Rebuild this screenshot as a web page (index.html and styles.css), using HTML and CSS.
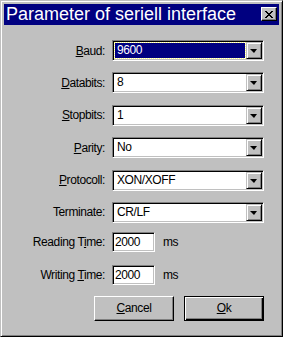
FILE: index.html
```html
<!DOCTYPE html>
<html lang="en">
<head>
  <meta charset="UTF-8">
  <title>Parameter of seriell interface</title>
  <link rel="stylesheet" href="styles.css">
</head>
<body>
  <div class="window">
    <div class="titlebar">
      <span class="title">Parameter of seriell interface</span>
      <button class="close-btn">
        <svg width="8" height="7" viewBox="0 0 8 7" shape-rendering="crispEdges">
          <path d="M0 0h2v1h-2z M6 0h2v1h-2z M1 1h2v1h-2z M5 1h2v1h-2z M2 2h4v1h-4z M3 3h2v1h-2z M2 4h4v1h-4z M1 5h2v1h-2z M5 5h2v1h-2z M0 6h2v1h-2z M6 6h2v1h-2z" fill="#000"/>
        </svg>
      </button>
    </div>

    <div class="form">
      <div class="combos">
        <label class="lbl"><u>B</u>aud:</label>
        <div class="combo focused"><span class="value"><span class="sel">9600</span></span><span class="drop"></span></div>

        <label class="lbl"><u>D</u>atabits:</label>
        <div class="combo"><span class="value">8</span><span class="drop"></span></div>

        <label class="lbl"><u>S</u>topbits:</label>
        <div class="combo"><span class="value">1</span><span class="drop"></span></div>

        <label class="lbl"><u>P</u>arity:</label>
        <div class="combo"><span class="value">No</span><span class="drop"></span></div>

        <label class="lbl"><u>P</u>rotocoll:</label>
        <div class="combo"><span class="value">XON/XOFF</span><span class="drop"></span></div>

        <label class="lbl">Terminate:</label>
        <div class="combo"><span class="value">CR/LF</span><span class="drop"></span></div>
      </div>

      <div class="times">
        <label class="lbl">Reading T<u>i</u>me:</label>
        <div class="time-field"><span class="edit">2000</span><span class="unit">ms</span></div>

        <label class="lbl">Writing <u>T</u>ime:</label>
        <div class="time-field"><span class="edit">2000</span><span class="unit">ms</span></div>
      </div>
    </div>

    <div class="buttons">
      <button class="btn"><u>C</u>ancel</button>
      <button class="btn default"><u>O</u>k</button>
    </div>
  </div>
</body>
</html>
```

FILE: styles.css
```css
body {
  margin: 0;
  background-color: #c0c0c0;
  font-family: "Liberation Sans", Arial, sans-serif;
  font-size: 12px;
  letter-spacing: -0.4px;
  color: #000;
}
.window {
  width: 283px;
  height: 337px;
  box-sizing: border-box;
  background-color: #c0c0c0;
  border: 1px solid;
  border-color: #c0c0c0 #000 #000 #c0c0c0;
  box-shadow: inset 1px 1px #fff, inset -1px -1px #808080;
  padding: 3px;
}
.titlebar {
  height: 21px;
  background-color: #000080;
  display: flex;
  align-items: flex-start;
  justify-content: space-between;
  padding: 0 2px 0 2px;
}
.title {
  color: #fff;
  font-size: 18px;
  letter-spacing: 0;
  line-height: 21px;
}
.close-btn {
  width: 16px;
  height: 14px;
  margin-top: 3px;
  padding: 0;
  background-color: #c0c0c0;
  border: 1px solid;
  border-color: #fff #000 #000 #fff;
  box-shadow: inset -1px -1px #808080;
  display: flex;
  align-items: center;
  justify-content: center;
}
.form {
  margin-top: 15px;
}
.lbl {
  text-align: right;
  align-self: center;
}
.combos {
  display: grid;
  grid-template-columns: 101px 152px;
  grid-auto-rows: 21px;
  column-gap: 7px;
  row-gap: 11.4px;
}
.combo {
  display: flex;
  box-sizing: border-box;
  border: 1px solid;
  border-color: #808080 #fff #fff #808080;
  box-shadow: inset 1px 1px #000, inset -1px -1px #c0c0c0;
  background-color: #fff;
  padding: 1px;
}
.value {
  flex: 1;
  padding-left: 3px;
  line-height: 17px;
}
.focused .value {
  padding: 1px;
}
.sel {
  display: block;
  height: 15px;
  line-height: 15px;
  background-color: #000080;
  color: #fff;
  outline: 1px dotted #ffff80;
  padding-left: 2px;
}
.drop {
  width: 16px;
  height: 17px;
  box-sizing: border-box;
  background-color: #c0c0c0;
  border: 1px solid;
  border-color: #c0c0c0 #000 #000 #c0c0c0;
  box-shadow: inset 1px 1px #fff, inset -1px -1px #808080;
  position: relative;
}
.drop::after {
  content: "";
  position: absolute;
  left: 3px;
  top: 6px;
  border-left: 4px solid transparent;
  border-right: 3px solid transparent;
  border-top: 4px solid #000;
}
.times {
  display: grid;
  grid-template-columns: 101px 152px;
  grid-auto-rows: 20px;
  column-gap: 7px;
  row-gap: 13px;
  margin-top: 9px;
}
.time-field {
  display: flex;
  align-items: center;
  gap: 8px;
}
.edit {
  width: 43px;
  height: 20px;
  box-sizing: border-box;
  border: 1px solid;
  border-color: #808080 #fff #fff #808080;
  box-shadow: inset 1px 1px #000, inset -1px -1px #c0c0c0;
  background-color: #fff;
  padding-left: 2px;
  line-height: 18px;
}
.buttons {
  display: flex;
  justify-content: flex-end;
  gap: 10px;
  margin-top: 11px;
  padding-right: 15px;
}
.btn {
  width: 80px;
  height: 25px;
  box-sizing: border-box;
  background-color: #c0c0c0;
  font-family: inherit;
  font-size: 12px;
  letter-spacing: -0.4px;
  color: #000;
  border: 1px solid;
  border-color: #fff #000 #000 #fff;
  box-shadow: inset -1px -1px #808080;
  padding: 0;
}
.btn.default {
  border: 1px solid #000;
  box-shadow: inset 1px 1px #fff, inset -1px -1px #000, inset -2px -2px #808080;
}
```
